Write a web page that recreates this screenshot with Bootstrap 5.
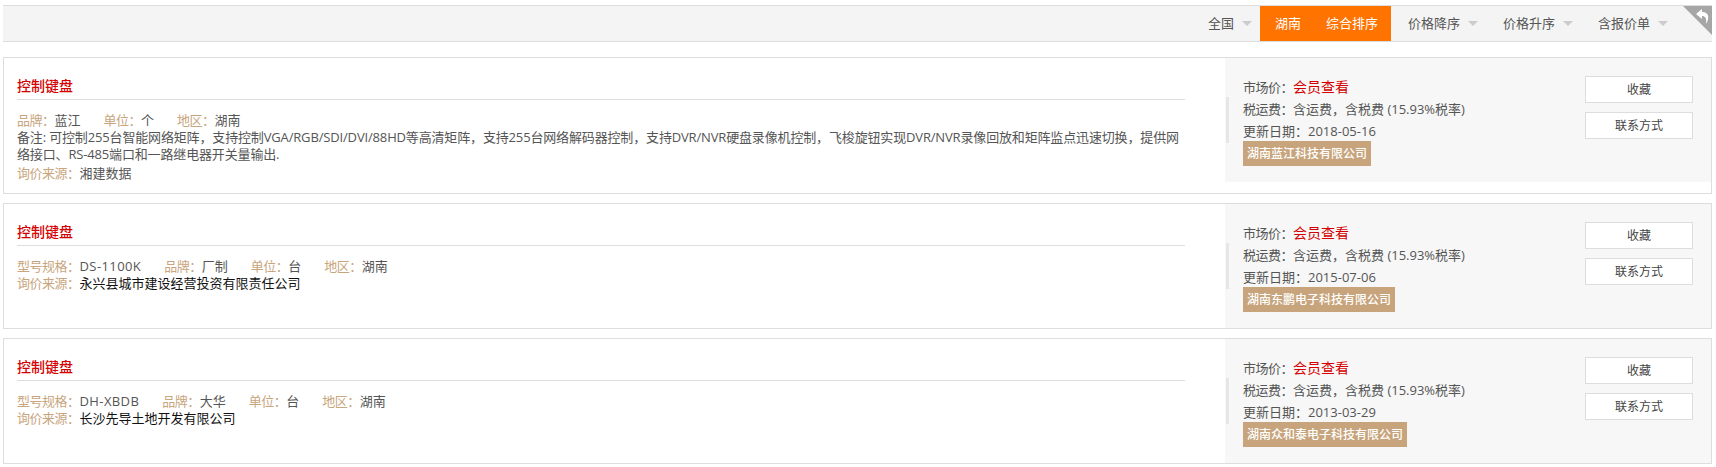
<!DOCTYPE html>
<html lang="zh-CN">
<head>
<meta charset="utf-8">
<title>控制键盘</title>
<link rel="stylesheet" href="https://cdn.jsdelivr.net/npm/bootstrap@5.3.0/dist/css/bootstrap.min.css">
<style>
body{font-family:"Open Sans","Noto Sans CJK SC","Liberation Sans",sans-serif;font-size:13px;color:#555;background:#fff;line-height:17px;padding:5px 4px 0 3px}
.sortbar{height:37px;background:#f4f4f4;border:1px solid #ddd;border-width:1px 0 1px 0;margin-bottom:15px;position:relative}
.sortitem{padding:0 8px 0 17px;line-height:35px;color:#555;white-space:nowrap}
.sortitem::after{content:"";display:inline-block;border:5px solid transparent;border-top-color:#ccc;border-bottom-width:0;margin-left:8px;vertical-align:2px}
.sortactive{background:#ff7300;color:#fff;padding:0 13px 0 15px;line-height:35px;gap:25px}
.sortgroup{margin-right:36px}
.prodbox{border:1px solid #ddd;margin-bottom:9px;align-items:flex-start}
.prodmain{width:1221px;padding:18px 40px 11px 13px;flex:none;min-height:124px}
.prodtitle{font-size:14px;font-weight:500;color:#d40000;line-height:20px;padding-bottom:3px;border-bottom:1px solid #ddd;margin-bottom:12px}
.lbl{color:#c8a57d;letter-spacing:-.5px}
.metaitem{margin-right:23px}
.specvalue{letter-spacing:.4px}
.noteline{letter-spacing:-.155px}
.srcline{margin-top:2px}
.srcdark{color:#111}
.prodside{flex:1;background:#f7f7f7;padding:18px 18px 0 18px;position:relative;height:124px}
.sidebar-tick{position:absolute;left:1px;top:39px;width:3px;height:46px;background:#e6e6e6}
.sideinfo{line-height:22px}
.sidelbl{letter-spacing:-.5px}
.pricered{color:#d40000;font-size:14px}
.companytag{display:inline-block;background:#c7a47b;color:#fff;line-height:25px;padding:0 4px;font-size:12px;font-weight:500;margin-top:-1px}
.sidebtn{display:block;width:108px;height:27px;line-height:25px;background:#fff;border:1px solid #ddd;text-align:center;color:#444;font-size:12px;text-decoration:none;margin-bottom:9px}
</style>
</head>
<body>
<div class="sortbar d-flex justify-content-end">
  <div class="sortitem">全国</div>
  <div class="d-flex sortactive"><span>湖南</span><span>综合排序</span></div>
  <div class="sortitem">价格降序</div>
  <div class="sortitem">价格升序</div>
  <div class="sortitem sortgroup">含报价单</div>
  <svg class="position-absolute top-0 end-0" width="29" height="29" viewBox="0 0 29 29"><polygon points="0,0 29,0 29,29" fill="#a6a6a6"/><path d="M19 3 L13 8 L19 13 L19 10 C22 10 24 12 23 18 C27 12 26 6 19 6 Z" fill="#fff"/></svg>
</div>

<div class="prodbox d-flex">
  <div class="prodmain">
    <div class="prodtitle">控制键盘</div>
    <div><span class="metaitem"><span class="lbl">品牌：</span>蓝江</span><span class="metaitem"><span class="lbl">单位：</span>个</span><span class="metaitem"><span class="lbl">地区：</span>湖南</span></div>
    <div class="noteline">备注: 可控制255台智能网络矩阵，支持控制VGA/RGB/SDI/DVI/88HD等高清矩阵，支持255台网络解码器控制，支持DVR/NVR硬盘录像机控制，飞梭旋钮实现DVR/NVR录像回放和矩阵监点迅速切换，提供网络接口、RS-485端口和一路继电器开关量输出.</div>
    <div class="srcline"><span class="lbl">询价来源：</span>湘建数据</div>
  </div>
  <div class="prodside d-flex justify-content-between">
    <span class="sidebar-tick"></span>
    <div class="sideinfo"><div><span class="sidelbl">市场价：</span><span class="pricered">会员查看</span></div><div><span class="sidelbl">税运费：</span>含运费，含税费 (15.93%税率)</div><div>更新日期：2018-05-16</div><span class="companytag">湖南蓝江科技有限公司</span></div>
    <div><a class="sidebtn" href="#">收藏</a><a class="sidebtn" href="#">联系方式</a></div>
  </div>
</div>

<div class="prodbox d-flex">
  <div class="prodmain">
    <div class="prodtitle">控制键盘</div>
    <div><span class="metaitem"><span class="lbl">型号规格：</span><span class="specvalue">DS-1100K</span></span><span class="metaitem"><span class="lbl">品牌：</span>厂制</span><span class="metaitem"><span class="lbl">单位：</span>台</span><span class="metaitem"><span class="lbl">地区：</span>湖南</span></div>
    <div><span class="lbl">询价来源：</span><span class="srcdark">永兴县城市建设经营投资有限责任公司</span></div>
  </div>
  <div class="prodside d-flex justify-content-between">
    <span class="sidebar-tick"></span>
    <div class="sideinfo"><div><span class="sidelbl">市场价：</span><span class="pricered">会员查看</span></div><div><span class="sidelbl">税运费：</span>含运费，含税费 (15.93%税率)</div><div>更新日期：2015-07-06</div><span class="companytag">湖南东鹏电子科技有限公司</span></div>
    <div><a class="sidebtn" href="#">收藏</a><a class="sidebtn" href="#">联系方式</a></div>
  </div>
</div>

<div class="prodbox d-flex">
  <div class="prodmain">
    <div class="prodtitle">控制键盘</div>
    <div><span class="metaitem"><span class="lbl">型号规格：</span><span class="specvalue">DH-XBDB</span></span><span class="metaitem"><span class="lbl">品牌：</span>大华</span><span class="metaitem"><span class="lbl">单位：</span>台</span><span class="metaitem"><span class="lbl">地区：</span>湖南</span></div>
    <div><span class="lbl">询价来源：</span><span class="srcdark">长沙先导土地开发有限公司</span></div>
  </div>
  <div class="prodside d-flex justify-content-between">
    <span class="sidebar-tick"></span>
    <div class="sideinfo"><div><span class="sidelbl">市场价：</span><span class="pricered">会员查看</span></div><div><span class="sidelbl">税运费：</span>含运费，含税费 (15.93%税率)</div><div>更新日期：2013-03-29</div><span class="companytag">湖南众和泰电子科技有限公司</span></div>
    <div><a class="sidebtn" href="#">收藏</a><a class="sidebtn" href="#">联系方式</a></div>
  </div>
</div>
<script src="https://cdn.jsdelivr.net/npm/bootstrap@5.3.0/dist/js/bootstrap.bundle.min.js"></script>
</body>
</html>
